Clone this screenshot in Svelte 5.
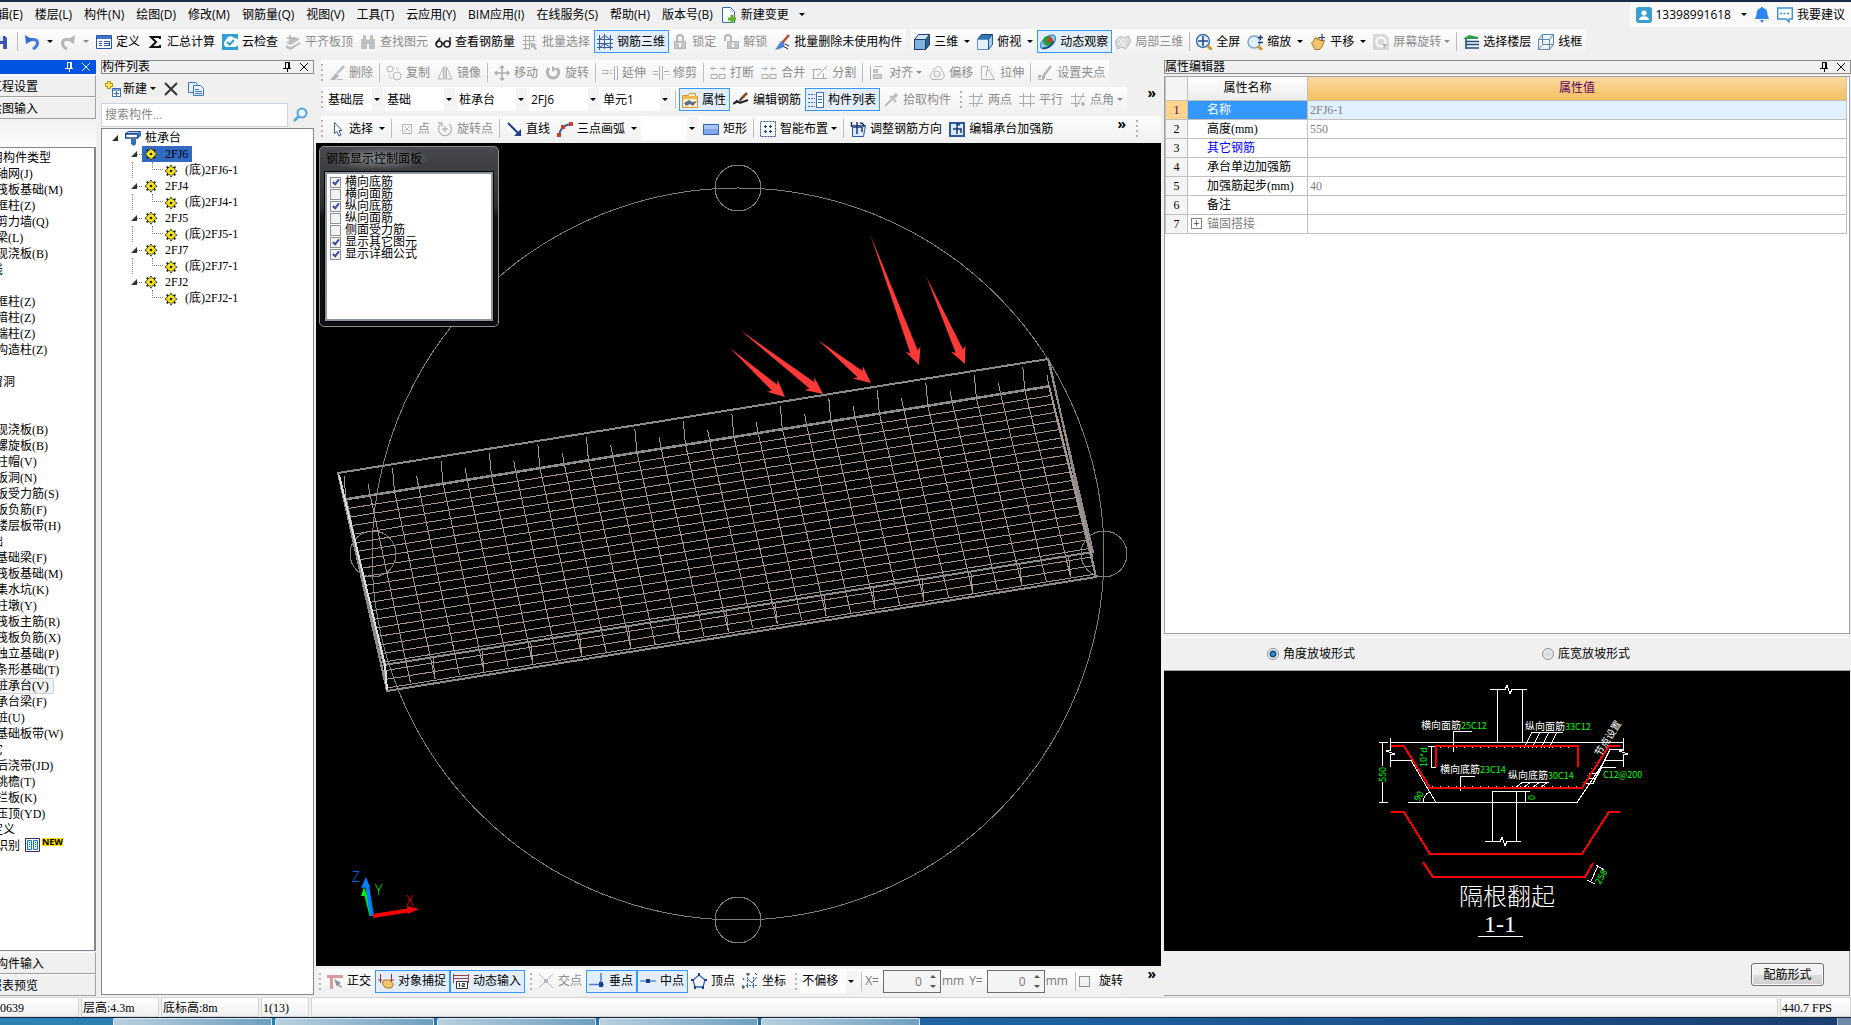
<script>
  const icons = {
    save: '<path fill="#3b55b5" d="M0 2h14l2 2v11H0z"/><path fill="#dfe6f8" d="M3 2h9v5H3z"/><path fill="#fff" d="M4 10h8v5H4z"/><path fill="#3b55b5" d="M6 11h2v3H6z"/>',
    undo: '<path fill="none" stroke="#3f7be0" stroke-width="3" d="M5 5.500h4c6 0 6 6 0 9.500"/><path fill="#2f6bd8" d="M1 1l1 9 7-4z"/>',
    redo: '<path fill="none" stroke="#777" stroke-width="3" d="M11 5.500H7c-6 0-6 6 0 9.500"/><path fill="#777" d="M15 1l-1 9-7-4z"/>',
    define: '<path fill="#fff" stroke="#2b57a8" d="M.5 1.500h15v13H.5z"/><path fill="#3f74c8" d="M1 2h14v3H1z"/><path stroke="#2b57a8" d="M3 7.500h3M3 9.500h3M3 11.500h3M8 7.500h5M8 9.500h5M8 11.500h5M13.500 7v5"/>',
    sigma: '<path fill="none" stroke="#111" stroke-width="2" d="M13 5V3H4l5 5-5 5h9v-2"/>',
    cloudcheck: '<path fill="#2f9fd8" d="M0 0h16v16H0z"/><path fill="#fff" d="M4 13a4 4 0 0 1 0-7 4.500 4.500 0 0 1 8-2 4 4 0 0 1 1 9z"/><path fill="none" stroke="#2f9fd8" stroke-width="2" d="M5 8l2.500 2.500L12 6"/>',
    align: '<path fill="#888" d="M1 9l9-6 5 2-9 6zM1 11l5 2 9-5v2l-9 6-5-2z"/><path stroke="#666" stroke-width="1.500" d="M5 1v6M2 4h8"/>',
    find: '<path fill="#888" d="M3 1h3v4H3zM10 1h3v4h-3zM1 5h6v10H1zM9 5h6v10H9zM7 6h2v4H7z"/>',
    glasses: '<circle cx="4" cy="10" r="3" fill="none" stroke="#222" stroke-width="1.500"/><circle cx="12" cy="10" r="3" fill="none" stroke="#222" stroke-width="1.500"/><path fill="none" stroke="#222" stroke-width="1.500" d="M1 10l4-6M15 10V3M7 9.500h2"/>',
    batch: '<path fill="none" stroke="#666" d="M1 2.500h12M1 6.500h12M1 10.500h8M1 14.500h7M3.500 1v15M7.500 1v15M11.500 1v6"/><path fill="#777" d="M9 8l6 3-2 1 2 3-2 1-2-3-2 1z"/>',
    rebar3d: '<path fill="none" stroke="#3c5f9c" d="M0 5.500h16M0 9.500h16M0 13.500h16M2.500 1v15M7.500 0v15M13.500 1v15M2.500 5.500l5-4 6 4M2.500 13.500l5-4 6 4"/>',
    lock: '<path fill="none" stroke="#777" stroke-width="2" d="M5 8V4a3 3 0 0 1 6 0v4"/><path fill="#999" stroke="#777" d="M2.500 7.500h11v7h-11z"/><path fill="#fff" d="M7 9h2v4H7z"/>',
    unlock: '<path fill="none" stroke="#777" stroke-width="2" d="M2 7V4a3 3 0 0 1 6 0v4"/><path fill="#999" stroke="#777" d="M4.500 7.500h11v7h-11z"/><path fill="#fff" d="M9 9h2v4H9z"/>',
    brush: '<path stroke="#b05030" stroke-width="2.500" d="M15 1L8 9"/><path fill="#4a86d8" d="M7 7l4 3-3 4-7 2z"/><path stroke="#224" d="M9 12l5 3M11 10l4 2"/>',
    cube: '<path fill="#cfe4f6" stroke="#1d3e6e" d="M.5 5.500l4-5h11v10l-4 5H.5z"/><path fill="#7fb2df" stroke="#1d3e6e" d="M.5 5.500h11v10H.5z"/><path fill="#2d5f9a" stroke="#1d3e6e" d="M11.500 5.500l4-5v10l-4 5z"/>',
    cubetop: '<path fill="#2f77b8" stroke="#1d3e6e" d="M.5 5.500l4-5h11l-4 5z"/><path fill="#e6f2fb" stroke="#5d8fbd" d="M.5 5.500h11v10H.5z"/><path fill="#a9cbe8" stroke="#1d5a8e" d="M11.500 5.500l4-5v10l-4 5z"/>',
    orbit: '<ellipse cx="8" cy="8" rx="9" ry="5" fill="#8fc6ef" stroke="#2d7fc0" transform="rotate(-40 8 8)"/><circle cx="8" cy="7" r="5" fill="#2f9a35"/><path fill="#d5372a" d="M9 2l4 4-3 3-2-2z"/><path fill="none" stroke="#1b4f80" stroke-width="1.500" d="M2 14c4 1 10-2 12-7"/>',
    local3d: '<path fill="#bbb" stroke="#777" d="M.5 7l5-5 3 2 5-2 2 6-5 7-4-2-4 2z"/><path fill="none" stroke="#fff" d="M4 5l7 8M9 4l-6 7M12 5l-6 8"/>',
    fit: '<circle cx="7" cy="7" r="6.500" fill="#e3f0fc" stroke="#3a6ea8" stroke-width="1.400"/><path stroke="#1c4a94" stroke-width="1.600" d="M7 2v10M2 7h10"/><path stroke="#d69327" stroke-width="3" d="M12 12l4 4"/>',
    zoom: '<circle cx="7" cy="8" r="6" fill="#e3f0fc" stroke="#7ba3cc" stroke-width="1.400"/><path stroke="#d69327" stroke-width="3" d="M11 12l4 4"/><path stroke="#223f70" stroke-width="1.400" d="M11 3.500h5M13.500 1v5M11 8.500h5"/>',
    pan: '<path fill="#f0c66c" stroke="#a8782a" d="M1.500 9l2-2 2-4 2 3 1-3 2 4 4-1-2 6-3 3.500H5z"/><path fill="none" stroke="#223f70" stroke-width="1.200" d="M12 0v7M9 3.500h6"/>',
    screenrot: '<path fill="#bbb" d="M0 0h12l4 4v12H0z"/><circle cx="8" cy="8" r="4.500" fill="none" stroke="#fff" stroke-width="2"/><path fill="#666" d="M10 10l4 0-3 4z"/>',
    floors: '<path fill="#2f9a4a" d="M0 5l6-4 9 2v2H4z"/><path fill="none" stroke="#1d5080" stroke-width="1.600" d="M3 7.500h13M3 10.500h13M3 14h13M3 5v10"/>',
    wire: '<path fill="#eef5fb" stroke="#5c86b4" d="M.5 5.500l4-5h11v10l-4 5H.5z"/><path fill="none" stroke="#5c86b4" d="M.5 5.500h11v10M11.500 5.500l4-5M4.500.5v10h11M4.500 10.500l-4 5"/>',
    newdoc: '<path fill="#fff" stroke="#2f6fa8" d="M1.500.5h8l4 4v11h-12z"/><path fill="#cfe2f4" d="M9 1v4h4z"/><path stroke="#5fae2c" stroke-width="3" d="M11 8v8M7 12h8"/>',
    user: '<rect width="16" height="16" rx="3" fill="#3a9ccf"/><circle cx="8" cy="6" r="2.600" fill="#fff"/><path fill="#fff" d="M3 13c0-5 10-5 10 0z"/>',
    bell: '<path fill="#2a86f0" d="M7 0h2v1c4 1 4.500 4 4.500 7l1.500 4H1l1.500-4c0-3 .5-6 4.500-7z"/><path fill="#2a86f0" d="M6 13h4l-2 3z"/>',
    chat: '<path fill="#fff" stroke="#3a8ee0" stroke-width="1.400" d="M.7 1h14.600v11H12v3l-3-3H.7z"/><path stroke="#3a8ee0" stroke-width="1.400" stroke-dasharray="2 1.500" d="M3 6.500h10"/>',
    del: '<path fill="#888" d="M14 0l2 2-7 7-2-1z"/><path fill="#777" d="M7 8l3 3-4 4-5 0z"/><path stroke="#777" d="M8 14.500h6"/>',
    copy: '<circle cx="4" cy="4" r="3" fill="none" stroke="#777"/><circle cx="11" cy="11" r="4" fill="none" stroke="#777"/><path fill="none" stroke="#777" stroke-dasharray="1 1" d="M8 3h4v3M3 9v4h3"/>',
    mirror: '<path fill="none" stroke="#777" d="M8 1v14M6.500 2v12H1zM9.500 2v12H15z"/>',
    move: '<path fill="none" stroke="#666" stroke-width="1.500" d="M8 1v14M1 8h14M6 3l2-2 2 2M6 13l2 2 2-2M3 6L1 8l2 2M13 6l2 2-2 2"/>',
    rotate: '<path fill="none" stroke="#777" stroke-width="3" d="M4 3c-4 5 0 10 4 10s8-5 4-10"/><path fill="#777" d="M7 1v6l5-3z"/>',
    extend: '<path fill="none" stroke="#666" d="M0 5.500h6v3H0M8 5.500h2M8 8.500h2M12.500 1v14M15.500 1v14"/>',
    trim: '<path fill="none" stroke="#666" d="M0 6.500h5M0 9.500h5M6.500 1v14M9.500 1v14M11 6.500h5" /><path stroke="#888" stroke-dasharray="1 1" d="M11 9.500h5"/>',
    cut: '<path fill="none" stroke="#666" d="M1 3.500h5M10 3.500h5M3 1.500l-2 2 2 2M13 1.500l2 2-2 2M1 9.500h6v4H1zM9 9.500h6v4H9z"/>',
    merge: '<path fill="none" stroke="#666" d="M1 3.500h5M10 3.500h5M4 1.500l2 2-2 2M12 1.500l-2 2 2 2M1 9.500h6v4H1zM9 9.500h6v4H9z"/>',
    split: '<path fill="none" stroke="#666" d="M0 4.500h9M0 13.500h15M1.500 4v9M11.500 8v5M5 11L15 1"/>',
    aligned: '<path stroke="#666" d="M1.500 1v14"/><path fill="#aaa" stroke="#777" d="M4.500 4.500h4v3h-4zM4.500 9.500h8v4h-8z"/><path stroke="#777" d="M6 1.500h7"/>',
    offset: '<path fill="none" stroke="#777" d="M4 14.500c-4-1-3-5-1-7l4-5c2-2 5-1 5 1l3 6c1 4-2 5-4 5z"/><circle cx="8" cy="9" r="3" fill="none" stroke="#777"/>',
    stretch: '<path fill="none" stroke="#777" d="M1.500 14.500v-13h6v4M1.500 14.500h13l-5-9h-3v6"/><path stroke="#777" stroke-dasharray="1 1" d="M8 2l5 3"/>',
    grip: '<path stroke="#777" d="M1 14.500h6M9 14.500h6"/><path stroke="#777" stroke-width="2.500" d="M14 1L7 10"/><path fill="#777" d="M1 10h3v3H1zM5 10h3v4H5z"/>',
    props: '<path fill="#fff3d4" stroke="#d8962a" d="M.5 3.500h6l1-2h6v3h2v11H.5z"/><path fill="#f4b850" d="M1 4h14v3H1z"/><path fill="#5b6f8c" d="M2 11l5-3 3 2 5-1-4 5-3-2-4 2z"/>',
    editbar: '<path stroke="#222" stroke-width="2" d="M0 12l4-3 3 2 8-3"/><path stroke="#8a4a2a" stroke-width="2.500" d="M14 1L8 7"/><path fill="#222" d="M7 6l2 2-3 2z"/>',
    list: '<path fill="none" stroke="#3b6db0" stroke-dasharray="2 1" d="M0 2.500h7M0 6.500h7M0 10.500h7M0 14.500h7"/><path fill="#fff" stroke="#3b6db0" d="M8.500.5h7v15h-7z"/><path stroke="#3b6db0" d="M10 4.500h4M10 7.500h4M10 10.500h4"/>',
    pick: '<path stroke="#888" stroke-width="3.500" d="M14 2l-4 4"/><path stroke="#888" stroke-width="2" d="M10 6l-8 8M7 4l6 6"/>',
    twopt: '<path fill="none" stroke="#666" d="M1 4.500h14M1 11.500h14M5.500 1v14M14 1L8 15"/>',
    parallel: '<path fill="none" stroke="#666" d="M0 4.500h16M0 11.500h16M4.500 1v14M11.500 1v14"/>',
    angle: '<path fill="none" stroke="#666" d="M1 4.500h14M1 11.500h9M5.500 1v14M14 1L6 15"/><circle cx="13" cy="12" r="2" fill="#777"/>',
    pointer: '<path fill="#fff" stroke="#3b5e92" d="M5.500 1.500v11l2.500-2 2 4.500 2-1-2-4.500h3z"/>',
    point: '<path fill="none" stroke="#777" d="M4.500 3.500h9v9h-9zM6 5l6 6M12 5l-6 6"/>',
    rotpoint: '<path fill="none" stroke="#777" stroke-width="1.300" d="M4 3a6.500 6.500 0 1 0 8 0M5 8h6M8 5v6M1 2h4v4"/>',
    line: '<path stroke="#1c3f8c" stroke-width="2" d="M2 2l10 10"/><path fill="#1c3f8c" d="M15 15H8l7-7z"/>',
    arc: '<path fill="none" stroke="#2a66b8" stroke-width="2" d="M2 14C3 8 7 4 14 3"/><path fill="#c8402a" d="M0 12h4v4H0zM4 4h4v4H4zM12 1h4v4h-4z"/>',
    rect: '<path fill="#7fa5ea" stroke="#3560b0" d="M.5 3.500h15v10H.5z"/><path fill="#a9c4f5" d="M1 4h14v4H1z"/>',
    smart: '<path fill="#f4f8fd" stroke="#2b4d86" stroke-dasharray="2 1" d="M.5.5h15v15H.5z"/><path stroke="#1c3766" d="M4 5.500h3M5.500 4v3M9 5.500h3M10.500 4v3M4 10.500h3M5.500 9v3M9 10.500h3M10.500 9v3"/>',
    direction: '<path fill="#dce9f8" stroke="#2b5ca0" d="M2.500 4.500h13l-2 11h-11z"/><path fill="none" stroke="#1c3766" stroke-width="1.500" d="M7 1v12M3 6h9v5M10 2c3 0 4 2 4 4M1.500 1v5"/>',
    editcap: '<path fill="#dce9f8" stroke="#2b5ca0" stroke-width="2" d="M1 2h14v13H1z"/><path fill="none" stroke="#1c3766" stroke-width="1.500" d="M8 3v10M4 8h8v4M8 3l3 1"/>',
    add: '<path fill="#fff" stroke="#3b6db0" d="M7.500 7.500h8v8h-8z"/><path fill="#7fa5da" d="M8 8h7v2H8z"/><path stroke="#3b6db0" d="M9 12.500h5M11.500 10v5"/><path stroke="#b89410" stroke-width="4" d="M4 0v8M0 4h8"/><path stroke="#ffe65a" stroke-width="2" d="M4 1v6M1 4h6"/>',
    cross: '<path stroke="#333" stroke-width="2" d="M2 2l12 12M14 2L2 14"/>',
    pages: '<path fill="#e8f1fb" stroke="#3b76bd" d="M.5 1.500h7l2 2v8h-9z"/><path fill="#e8f1fb" stroke="#3b76bd" d="M5.500 4.500h7l3 3v7h-10z"/><path stroke="#3b76bd" d="M7 8.500h4M7 10.500h7M7 12.500h7"/>',
    search: '<circle cx="9" cy="6" r="4.500" fill="#eaf5fd" stroke="#56a5dc" stroke-width="2"/><path stroke="#56a5dc" stroke-width="2.500" d="M5.500 9.500L1 14"/>',
    pile: '<path fill="#b7cfec" stroke="#1c4a94" d="M.5 3.500l3-2h12l-3 2z"/><path fill="#fff" stroke="#1c4a94" stroke-width="1.500" d="M.7 4h12v4h-12z"/><path fill="#2f6dc0" d="M13 4l3-2v4l-3 2zM6 9h5v5l-2 2-3-2z"/>',
    gear: '<path stroke="#222" stroke-width="2" d="M8 1v14M1 8h14M3 3l10 10M13 3L3 13"/><circle cx="8" cy="8" r="5" fill="#f4e21c" stroke="#222"/><path stroke="#f4e21c" stroke-width="1.500" d="M8 2v12M2 8h12"/><circle cx="8" cy="8" r="1.500" fill="#222"/>',
    ortho: '<path stroke="#d89a9a" stroke-width="3" d="M0 3.500h16M4.500 2v14"/><path fill="#8a94a4" d="M7 6l7 4-2 1 3 3-1 1-3-3-1 2z"/>',
    snap: '<path fill="none" stroke="#9a3030" d="M2.500 1v9M13.500 1v8M0 7h4M12 7h4"/><path fill="#f0c66c" stroke="#a8782a" d="M5.500 7l6 0 4 4-2 4h-6l-3-4z"/>',
    dyn: '<path fill="none" stroke="#a04040" d="M0 2.500h16M.5 1v9M15.500 1v9M0 5.500h16"/><path fill="#fff" stroke="#333" d="M3.500 8.500h11v7h-11z"/><path fill="none" stroke="#333" d="M6.500 10v4M9 10.500h2.500v1.500H9v1.500h3"/>',
    inter: '<path stroke="#777" d="M1 1l14 14M15 1L1 15"/><path fill="#777" d="M6 6h4v4H6z"/>',
    perp: '<path stroke="#4a7fc8" stroke-width="1.500" d="M12 0v14M0 11.500h15"/><path fill="#1c3f8c" d="M10 9h4v5h-4z"/>',
    mid: '<path stroke="#4a9ad8" stroke-width="1.500" d="M0 8h16"/><path fill="#1c2f8c" d="M6 6h4v4H6z"/>',
    vertex: '<path fill="none" stroke="#2a66b8" stroke-width="1.300" d="M8 2l6 5-2 7H4L2 7z"/><path fill="#1c3f8c" d="M7 0h2v3H7zM0 6h3v2H0zM13 6h3v2h-3zM3 13h2v3H3zM11 13h2v3h-2z"/>',
    coord: '<path fill="none" stroke="#2a66b8" stroke-dasharray="2 1" d="M5.500 4v12M4 12.500h12M11.500 4v12"/><path fill="none" stroke="#2a66b8" d="M6 6l4 4 5-6"/><path fill="none" stroke="#333" d="M5 0h2v2H5zM13 0l2 2M1 5l1 2M0 13h2v2H0z"/>'
  };

  const menus = ["楼层(L)", "构件(N)", "绘图(D)", "修改(M)", "钢筋量(Q)", "视图(V)", "工具(T)", "云应用(Y)", "BIM应用(I)", "在线服务(S)", "帮助(H)", "版本号(B)"];

  const mainTools = [
    { icon: "define", label: "定义" },
    { icon: "sigma", label: "汇总计算" },
    { icon: "cloudcheck", label: "云检查" },
    { icon: "align", label: "平齐板顶", off: true },
    { icon: "find", label: "查找图元", off: true },
    { icon: "glasses", label: "查看钢筋量" },
    { icon: "batch", label: "批量选择", off: true },
    { icon: "rebar3d", label: "钢筋三维", on: true },
    { icon: "lock", label: "锁定", off: true },
    { icon: "unlock", label: "解锁", off: true },
    { icon: "brush", label: "批量删除未使用构件" }
  ];

  const viewTools = [
    { icon: "cube", label: "三维", arrow: "wide" },
    { icon: "cubetop", label: "俯视", arrow: "wide" },
    { icon: "orbit", label: "动态观察", on: true },
    { icon: "local3d", label: "局部三维", off: true },
    { sep: true },
    { icon: "fit", label: "全屏" },
    { icon: "zoom", label: "缩放", arrow: "wide" },
    { icon: "pan", label: "平移", arrow: "wide" },
    { icon: "screenrot", label: "屏幕旋转", off: true, arrow: "tight" },
    { sep: true },
    { icon: "floors", label: "选择楼层" },
    { icon: "wire", label: "线框" }
  ];

  const editTools = [
    { icon: "del", label: "删除", off: true },
    { sep: true },
    { icon: "copy", label: "复制", off: true },
    { icon: "mirror", label: "镜像", off: true },
    { sep: true },
    { icon: "move", label: "移动", off: true },
    { icon: "rotate", label: "旋转", off: true },
    { sep: true },
    { icon: "extend", label: "延伸", off: true },
    { icon: "trim", label: "修剪", off: true },
    { sep: true },
    { icon: "cut", label: "打断", off: true },
    { icon: "merge", label: "合并", off: true },
    { icon: "split", label: "分割", off: true },
    { sep: true },
    { icon: "aligned", label: "对齐", off: true, arrow: "tight" },
    { icon: "offset", label: "偏移", off: true },
    { icon: "stretch", label: "拉伸", off: true },
    { sep: true },
    { icon: "grip", label: "设置夹点", off: true }
  ];

  const memberTools = [
    { sep: true },
    { icon: "props", label: "属性", on: true },
    { icon: "editbar", label: "编辑钢筋" },
    { icon: "list", label: "构件列表", on: true },
    { icon: "pick", label: "拾取构件", off: true }
  ];

  const axisTools = [
    { icon: "twopt", label: "两点", off: true },
    { icon: "parallel", label: "平行", off: true },
    { icon: "angle", label: "点角", off: true, arrow: "tight" }
  ];

  const drawTools = [
    { icon: "pointer", label: "选择", arrow: "wide" },
    { sep: true },
    { icon: "point", label: "点", off: true },
    { icon: "rotpoint", label: "旋转点", off: true },
    { sep: true },
    { icon: "line", label: "直线" },
    { icon: "arc", label: "三点画弧", arrow: "wide" }
  ];

  const layoutTools = [
    { icon: "rect", label: "矩形" },
    { sep: true },
    { icon: "smart", label: "智能布置", arrow: "tight" },
    { sep: true },
    { icon: "direction", label: "调整钢筋方向" },
    { icon: "editcap", label: "编辑承台加强筋" }
  ];

  const modeTools = [
    { icon: "ortho", label: "正交" },
    { icon: "snap", label: "对象捕捉", on: true },
    { icon: "dyn", label: "动态输入", on: true }
  ];

  const snapTools = [
    { icon: "inter", label: "交点", off: true },
    { icon: "perp", label: "垂点", on: true },
    { icon: "mid", label: "中点", on: true },
    { icon: "vertex", label: "顶点" },
    { icon: "coord", label: "坐标" }
  ];

  const combos = [
    { name: "楼层", value: "基础层", small: true },
    { name: "构件大类", value: "基础" },
    { name: "构件类型", value: "桩承台" },
    { name: "构件", value: "2FJ6" },
    { name: "单元", value: "单元1" }
  ];

  const categories = [
    ["常用构件类型", ["轴网(J)", "筏板基础(M)", "框柱(Z)", "剪力墙(Q)", "梁(L)", "现浇板(B)"]],
    ["轴线", []],
    ["柱", ["框柱(Z)", "暗柱(Z)", "端柱(Z)", "构造柱(Z)"]],
    ["墙", []],
    ["门窗洞", []],
    ["梁", []],
    ["板", ["现浇板(B)", "螺旋板(B)", "柱帽(V)", "板洞(N)", "板受力筋(S)", "板负筋(F)", "楼层板带(H)"]],
    ["基础", ["基础梁(F)", "筏板基础(M)", "集水坑(K)", "柱墩(Y)", "筏板主筋(R)", "筏板负筋(X)", "独立基础(P)", "条形基础(T)", "桩承台(V)", "承台梁(F)", "桩(U)", "基础板带(W)"]],
    ["其它", ["后浇带(JD)", "挑檐(T)", "栏板(K)", "压顶(YD)"]],
    ["自定义", []]
  ];

  const members = ["2FJ6", "2FJ4", "2FJ5", "2FJ7", "2FJ2"];

  const properties = [
    { name: "名称", value: "2FJ6-1", current: true },
    { name: "高度(mm)", value: "550" },
    { name: "其它钢筋", value: "", link: true },
    { name: "承台单边加强筋", value: "" },
    { name: "加强筋起步(mm)", value: "40" },
    { name: "备注", value: "" },
    { name: "锚固搭接", value: "", group: true }
  ];

  let rebarOptions = $state([
    { label: "横向底筋", checked: true },
    { label: "横向面筋", checked: false },
    { label: "纵向底筋", checked: true },
    { label: "纵向面筋", checked: false },
    { label: "侧面受力筋", checked: false },
    { label: "显示其它图元", checked: true },
    { label: "显示详细公式", checked: true }
  ]);
  let slope = $state("angle");
  let offsetX = $state(0);
  let offsetY = $state(0);

  // cage corners: top-left, top-right, bottom-right, bottom-left
  const cage = [[30, 356], [733, 243], [780, 434], [71, 548]];
  const mix = (a, b, t) => [a[0] + (b[0] - a[0]) * t, a[1] + (b[1] - a[1]) * t];
  const seg = (a, b) => `M${a[0].toFixed(1)} ${a[1].toFixed(1)}L${b[0].toFixed(1)} ${b[1].toFixed(1)}`;

  let mesh = "";
  for (let i = 0; i < 23; i++) {
    const t = 0.005 + (i / 22) * 0.98;
    mesh += seg(mix(cage[0], cage[3], t), mix(cage[1], cage[2], t));
  }
  for (let i = 0; i < 30; i++) {
    const top = mix(cage[0], cage[1], i / 29);
    const bottom = mix(cage[3], cage[2], i / 29);
    const bend = mix(top, bottom, 0.98);
    mesh += seg(top, bend);
    mesh += i % 2 ? seg([top[0] - 2, top[1] - 11], top) : seg([top[0] - 2, top[1] - 23], top);
    if (i % 2 === 0) mesh += seg([bend[0] - 2, bend[1] - 21], bend);
  }

  const arrowShape = ([x1, y1, x2, y2]) => {
    const len = Math.hypot(x2 - x1, y2 - y1);
    const ux = (x2 - x1) / len;
    const uy = (y2 - y1) / len;
    const at = (back, side) => `${(x2 - ux * back - uy * side).toFixed(1)},${(y2 - uy * back + ux * side).toFixed(1)}`;
    return [`${x1},${y1}`, at(14, 4), at(17, 8), `${x2},${y2}`, at(17, -8), at(14, -4)].join(" ");
  };
  const arrows = [
    [414, 205, 469, 254],
    [424, 187, 507, 251],
    [502, 197, 555, 240],
    [554, 91, 603, 222],
    [610, 133, 649, 221]
  ];
</script>

{#snippet icon(name)}
  <svg class="icon" viewBox="0 0 16 16" aria-hidden="true">{@html icons[name]}</svg>
{/snippet}

{#snippet tools(list)}
  {#each list as t}
    {#if t.sep}
      <span class="sep"></span>
    {:else}
      <button class="tool" class:on={t.on} disabled={t.off}>
        {@render icon(t.icon)}<span>{t.label}</span>
        {#if t.arrow}<i class="arrow {t.arrow}"></i>{/if}
      </button>
    {/if}
  {/each}
{/snippet}

{#snippet combo(name, value, size)}
  <span class="combo {size}">
    <select aria-label={name}><option>{value}</option></select>
    <i class="arrow"></i>
  </span>
{/snippet}

{#snippet caption(title, active)}
  <header class="caption" class:active>
    <h2>{title}</h2>
    <button aria-label="固定"><svg viewBox="0 0 10 10"><path fill="none" stroke="currentColor" d="M3 .5h4M3.500 0v6M6.500 0v6M7.500 0v6M1 6.500h8M5.500 7v3" /></svg></button>
    <button aria-label="关闭"><svg viewBox="0 0 10 10"><path stroke="currentColor" d="M1 1l8 8M9 1L1 9" /></svg></button>
  </header>
{/snippet}

<div class="app">
  <nav class="menubar">
    <button class="cut">编辑(E)</button>
    {#each menus as m}<button>{m}</button>{/each}
    <button class="change">{@render icon("newdoc")}<span>新建变更</span><i class="arrow wide"></i></button>
    <div class="account">
      <button>{@render icon("user")}<span>13398991618</span><i class="arrow wide"></i></button>
      <button aria-label="通知">{@render icon("bell")}</button>
      <button>{@render icon("chat")}<span>我要建议</span></button>
    </div>
  </nav>

  <div class="toolbar main">
    <div class="group file">
      <button class="tool" aria-label="保存">{@render icon("save")}</button>
      <span class="sep"></span>
      <button class="tool" aria-label="撤销">{@render icon("undo")}<i class="arrow tight"></i></button>
      <button class="tool" aria-label="恢复" disabled>{@render icon("redo")}<i class="arrow tight"></i></button>
    </div>
    <div class="group">{@render tools(mainTools)}</div>
    <div class="group view">{@render tools(viewTools)}</div>
  </div>

  <div class="workspace">
    <aside class="modules">
      {@render caption("模块导航栏", true)}
      <button class="module first">工程设置</button>
      <button class="module">绘图输入</button>
      <div class="strip"></div>
      <ul class="types">
        {#each categories as [name, items]}
          <li>{name}</li>
          {#each items as item}
            <li class="leaf"><span class:picked={item === "桩承台(V)"}>{item}</span></li>
          {/each}
        {/each}
        <li class="leaf cad">
          识别
          <svg width="15" height="14" viewBox="0 0 15 14" aria-hidden="true"><path fill="#fff" stroke="#335" d="M.5.5h14v13H.5z" /><path fill="#d8ebff" stroke="#1677d8" d="M2.500 2.500h4v9h-4zM8.500 2.500h4v9h-4z" /><path stroke="#1677d8" stroke-dasharray="1 1" d="M4.500 4v6M10.500 4v6" /></svg>
          <b>NEW</b>
        </li>
      </ul>
      <button class="module">单构件输入</button>
      <button class="module">报表预览</button>
    </aside>

    <aside class="members">
      {@render caption("构件列表")}
      <div class="member-bar">
        <button class="tool">{@render icon("add")}<span>新建</span><i class="arrow tight"></i></button>
        <button class="tool" aria-label="删除">{@render icon("cross")}</button>
        <button class="tool" aria-label="复制">{@render icon("pages")}</button>
      </div>
      <div class="search">
        <input type="text" placeholder="搜索构件..." aria-label="搜索构件" />
        <button aria-label="搜索">{@render icon("search")}</button>
      </div>
      <ul class="tree">
        <li class="root"><i class="fold"></i>{@render icon("pile")}<span>桩承台</span></li>
        {#each members as m, i}
          <li class="member"><i class="fold"></i><i class="dash"></i><span class="node" class:selected={i === 0}>{@render icon("gear")}{m}</span></li>
          <li class="bottom" class:last={i === members.length - 1}><i class="elbow"></i>{@render icon("gear")}<span>(底){m}-1</span></li>
        {/each}
      </ul>
    </aside>

    <main>
      <div class="toolbar edit">
        <div class="group"><i class="grip"></i>{@render tools(editTools)}</div>
      </div>
      <div class="toolbar">
        <div class="group">
          <i class="grip"></i>
          {#each combos as c}{@render combo(c.name, c.value, c.small ? "small" : "")}{/each}
          {@render tools(memberTools)}
        </div>
        <div class="group"><i class="grip"></i>{@render tools(axisTools)}</div>
        <button class="more" aria-label="更多">»</button>
      </div>
      <div class="toolbar">
        <div class="group draw">
          <i class="grip"></i>
          {@render tools(drawTools)}
          {@render combo("绘制方式", "", "small")}
          {@render tools(layoutTools)}
          <button class="more" aria-label="更多">»</button>
        </div>
        <div class="group tail"><i class="grip"></i></div>
      </div>

      <div class="canvas">
        <svg viewBox="0 0 845 823" preserveAspectRatio="xMidYMid meet" aria-label="钢筋三维">
          <g fill="none" stroke="#7d7d7d" shape-rendering="crispEdges">
            <circle cx="422" cy="411" r="366" />
            <circle cx="422" cy="45" r="23" />
            <circle cx="422" cy="777" r="23" />
            <circle cx="57" cy="411" r="23" />
            <circle cx="788" cy="411" r="23" />
          </g>
          <path d={mesh} fill="none" stroke="#a8958c" shape-rendering="crispEdges" />
          <g fill="none" stroke="#8c8c8c" stroke-width="2" shape-rendering="crispEdges">
            <path d="M22 330L732 216L777 409L68 522Z" />
            <path d="M30 356L733 243L780 434L71 548Z" />
            <path d="M22 330l49 218M733 217l47 217" />
            <path stroke="#a8958c" d="M733 243l43 170" />
            <path stroke="#dcdcdc" d="M23 332l46 190l2 25" />
          </g>
          {#each arrows as a}<polygon points={arrowShape(a)} fill="#ff3838" />{/each}
          <path stroke="#00f000" stroke-width="3" d="M55 773l-6-24" />
          <path fill="#00f000" d="M48 744l-3 9h6z" />
          <path stroke="#0080ff" stroke-width="4" d="M56 773l-5-31" />
          <path fill="#0080ff" d="M50 734l-5 11 9-1z" />
          <path stroke="red" stroke-width="4" d="M57 773l38-6" />
          <path fill="red" d="M103 766l-12-3 1 8z" />
          <g class="axis">
            <text x="36" y="739" fill="#0080ff">Z</text>
            <text x="59" y="752" fill="#00f000">Y</text>
            <text x="90" y="763" fill="red">X</text>
          </g>
        </svg>
        <section class="dialog">
          <h3>钢筋显示控制面板</h3>
          <div class="options">
            {#each rebarOptions as o}
              <label><input type="checkbox" bind:checked={o.checked} />{o.label}</label>
            {/each}
          </div>
        </section>
      </div>

      <div class="toolbar snap">
        <div class="group"><i class="grip"></i>{@render tools(modeTools)}</div>
        <div class="group"><i class="grip"></i>{@render tools(snapTools)}</div>
        <div class="group coords">
          <i class="grip"></i>
          {@render combo("偏移方式", "不偏移", "small")}
          <span class="sep"></span>
          <label>X= <input type="number" bind:value={offsetX} disabled /></label><span class="unit">mm</span>
          <label>Y= <input type="number" bind:value={offsetY} disabled /></label><span class="unit">mm</span>
          <span class="sep"></span>
          <label class="turn"><input type="checkbox" /><span>旋转</span></label>
        </div>
        <button class="more" aria-label="更多">»</button>
      </div>
    </main>

    <aside class="inspector">
      {@render caption("属性编辑器")}
      <div class="sheet">
        <table>
          <thead>
            <tr><th class="num"></th><th class="name">属性名称</th><th class="value">属性值</th></tr>
          </thead>
          <tbody>
            {#each properties as p, i}
              <tr class:current={p.current} class:link={p.link} class:group-row={p.group}>
                <th class="num">{i + 1}</th>
                <td class="name">{#if p.group}<button class="plus" aria-label="展开">+</button>{/if}{p.name}</td>
                <td class="value">{p.value}</td>
              </tr>
            {/each}
          </tbody>
        </table>
      </div>
      <div class="slopes">
        <label><input type="radio" name="slope" value="angle" bind:group={slope} />角度放坡形式</label>
        <label><input type="radio" name="slope" value="width" bind:group={slope} />底宽放坡形式</label>
      </div>
      <div class="section">
        <svg viewBox="0 0 686 280" aria-label="隔根翻起 1-1">
          <g fill="none" stroke="#fff" shape-rendering="crispEdges">
            <path d="M326 18.500h15l2-4 3 8 2-4h15M333.500 18v53M358.500 18v53" />
            <path d="M226 71.500h234M226.500 67v12l-4 1 8 3-4 1v12M459.500 67v12l-4 1 8 3-4 1v12" />
            <path d="M226 89.500h21l25 42M244 131.500h169l28-42h18M421 112.500h8l17-34h13" />
            <path d="M328.500 170v-49.500h24V170M321 170.500h15l2-4 3 8 2-4h14M352 120.500h14M361.500 120v11" />
            <path d="M218.500 71v60M215 71.500h9M215 131.500h9M267.500 75v21M264 75.500h8M267 96.500h5" />
            <path d="M259.500 131c0-5 2-8 6-10" />
            <path d="M289.500 81V60.500h18M296.500 120v-14.500h14" />
            <path d="M368 61.500h31M368 61l-8 16M376 61l-8 16M385 61l-8 16M393 61l-8 16" />
            <path d="M359 111.500h26M359 111l-7 5M367 111l-7 5M376 111l-7 5M384 111l-7 5" />
            <path d="M452 96.500h-14l-9 16M425 102.500h9M423 107.500h9" />
            <path d="M434 195l-7 15M432 194l8 5M423 209l8 4" />
            <path d="M314 265.500h45" />
          </g>
          <g fill="none" stroke="red" stroke-width="2" shape-rendering="crispEdges">
            <path d="M227 75h13l26 42h152l27-42h11M272 96V75h142v21" />
            <path d="M227 141h13l26 42h152l27-42h11M259 191l10 15h152l8-14" />
          </g>
          <g stroke="#ff0" stroke-dasharray="1 7" shape-rendering="crispEdges">
            <path d="M276 76.500h136M268 115.500h148" />
            <path stroke="#f0f" d="M419 112l16-26" />
          </g>
          <g class="note">
            <text x="257" y="58">横向面筋</text>
            <text x="361" y="59">纵向面筋</text>
            <text x="276" y="102">横向底筋</text>
            <text x="344" y="108">纵向底筋</text>
            <text x="0" y="0" transform="translate(436 86) rotate(-57)">节点设置</text>
          </g>
          <g class="dim">
            <text x="297" y="58">25C12</text>
            <text x="401" y="59">33C12</text>
            <text x="316" y="102">23C14</text>
            <text x="384" y="108">30C14</text>
            <text x="439" y="107">C12@200</text>
            <path fill="#000" d="M213 95h11v16h-11z" />
            <text transform="translate(222 111) rotate(-90)">550</text>
            <text transform="translate(263 96) rotate(-90)">10*d</text>
            <text transform="translate(255 131) rotate(-60)">90</text>
            <text transform="translate(371 129) rotate(-90)">0</text>
            <text transform="translate(436 214) rotate(-60)">258</text>
          </g>
          <text class="title" x="295" y="234">隔根翻起</text>
          <text class="title" x="320" y="261">1-1</text>
        </svg>
      </div>
      <div class="actions"><button>配筋形式</button></div>
    </aside>
  </div>

  <footer class="status">
    <span class="s1">0639</span>
    <span class="s2">层高:4.3m</span>
    <span class="s3">底标高:8m</span>
    <span class="s4">1(13)</span>
    <span class="rest"></span>
    <span class="fps">440.7 FPS</span>
  </footer>
  <div class="taskbar">
    <i class="tray"></i>
    {#each Array(5) as _}<i class="task"></i>{/each}
    <i class="desk"></i>
  </div>
</div>

<style>
  :global(body) {
    margin: 0;
    overflow: hidden;
  }

  .app {
    --ui: "Open Sans", "Noto Sans CJK SC", sans-serif;
    --song: "Liberation Serif", "Noto Sans CJK SC", serif;
    box-sizing: border-box;
    height: 100vh;
    display: flex;
    flex-direction: column;
    overflow: hidden;
    border-top: 2px solid #1b2b4c;
    background: #f0f0f0;
    color: #000;
    font: 12px/16px var(--ui);
    white-space: nowrap;
  }

  .app :is(button, input, select) {
    margin: 0;
    padding: 0;
    border: 0;
    background: none;
    color: inherit;
    font: inherit;
  }

  ul,
  h2,
  h3 {
    margin: 0;
    padding: 0;
    list-style: none;
    font-size: 12px;
    font-weight: normal;
  }

  .icon {
    flex: none;
    width: 16px;
    height: 16px;
  }

  .arrow {
    flex: none;
    border: solid transparent;
    border-width: 3px 3px 0;
    border-top-color: #000;
  }

  .arrow.wide {
    margin-left: 6px;
  }

  .arrow.tight {
    margin-left: 3px;
  }

  .menubar {
    flex: none;
    box-sizing: border-box;
    height: 27px;
    display: flex;
    align-items: center;
    gap: 12px;
    padding-bottom: 2px;
  }

  .menubar button {
    display: flex;
    align-items: center;
    gap: 4px;
  }

  .app .menubar .cut {
    margin-left: -15px;
  }

  .app .menubar .change {
    margin-left: -4px;
  }

  .account {
    display: flex;
    align-items: center;
    gap: 7px;
    height: 24px;
    margin-left: auto;
    padding: 0 6px;
    background: #f9f9f9;
  }

  .toolbar {
    flex: none;
    display: flex;
    align-items: center;
    height: 29px;
    padding-left: 5px;
  }

  .toolbar.main {
    height: 25px;
    padding: 0;
    margin-bottom: 6px;
  }

  .toolbar.edit {
    height: 25px;
  }

  .toolbar.snap {
    height: 30px;
    padding-left: 3px;
  }

  .group {
    display: flex;
    align-items: center;
    height: 25px;
    background: linear-gradient(#fdfdfd, #f1f1f1);
  }

  .file {
    margin-left: -12px;
  }

  .view {
    margin-left: 5px;
  }

  .tool {
    display: flex;
    align-items: center;
    height: 23px;
  }

  .app .tool {
    padding: 0 3px 0 2px;
    border: 1px solid transparent;
  }

  .tool .icon {
    margin-right: 4px;
  }

  .app .tool.on {
    border-color: #3399ff;
    background: #e3eefa;
  }

  .app .tool:disabled {
    color: #8d8d8d;
  }

  .tool:disabled .icon {
    opacity: 0.5;
  }

  .tool:disabled .arrow {
    border-top-color: #8d8d8d;
  }

  .sep {
    flex: none;
    width: 1px;
    height: 19px;
    margin: 0 3px 0 2px;
    background: #bdbdbd;
  }

  .grip {
    flex: none;
    width: 2px;
    height: 17px;
    margin-right: 3px;
    background: repeating-linear-gradient(#b5b5b5 0 2px, transparent 2px 5px);
  }

  .group + .group .grip {
    margin-left: 5px;
  }

  .combo {
    display: flex;
    align-items: center;
    width: 70px;
    height: 23px;
    margin-right: 2px;
    background: linear-gradient(90deg, #fff 59px, #f4f4f4 59px);
  }

  .combo.small {
    width: 57px;
    background: linear-gradient(90deg, #fff 46px, #f4f4f4 46px);
  }

  .app .combo select {
    flex: 1;
    min-width: 0;
    padding-left: 2px;
    appearance: none;
  }

  .combo .arrow {
    margin-right: 3px;
  }

  .app .more {
    align-self: flex-start;
    margin: 0 5px 0 auto;
    font: bold 14px/16px var(--ui);
  }

  .draw {
    flex: 1;
  }

  .tail {
    width: 30px;
  }

  .workspace {
    flex: 1;
    min-height: 0;
    display: flex;
  }

  .caption {
    flex: none;
    box-sizing: border-box;
    display: flex;
    align-items: center;
    gap: 7px;
    height: 14px;
    padding-right: 4px;
    border: 1px solid #8c8c8c;
    font: 12px/12px var(--song);
  }

  .caption h2 {
    flex: 1;
  }

  .caption button {
    display: flex;
  }

  .caption svg {
    width: 10px;
    height: 10px;
    shape-rendering: crispEdges;
  }

  .caption.active {
    border-color: #0054e3;
    background: #0054e3;
    color: #fff;
  }

  /* the window is shifted left, so this panel starts outside the page */
  .modules {
    flex: none;
    width: 164px;
    margin-left: -68px;
    display: flex;
    flex-direction: column;
    font-family: var(--song);
  }

  .app .module {
    flex: none;
    box-sizing: border-box;
    height: 22px;
    padding-top: 1px;
    border: 1px solid;
    border-color: #fff #a0a0a0 #a0a0a0 #fff;
    font-family: var(--song);
  }

  .app .module.first {
    margin-top: 1px;
  }

  .strip {
    height: 28px;
    background: linear-gradient(#f0f0f0, #fdfdfd);
  }

  .types {
    flex: 1;
    min-height: 0;
    margin-bottom: 1px;
    overflow: hidden;
    padding: 2px 0 0 46px;
    border: solid #828790;
    border-width: 1px 2px 1px 1px;
    background: #fff;
  }

  .types li {
    display: flex;
    height: 16px;
  }

  .types .leaf {
    padding-left: 17px;
  }

  .types .picked {
    height: 14px;
    padding-right: 4px;
    border: 1px solid #d4d4d4;
    border-left: 0;
    border-radius: 2px;
    background: #f2f2f2;
    line-height: 14px;
  }

  .types .cad {
    gap: 5px;
  }

  .cad b {
    margin-left: -3px;
    align-self: flex-start;
    background: #ffe000;
    font: bold 9px/8px var(--ui);
  }

  .members {
    flex: none;
    width: 213px;
    margin: 0 2px 0 5px;
    display: flex;
    flex-direction: column;
    font-family: var(--song);
  }

  .member-bar {
    flex: none;
    display: flex;
    align-items: center;
    height: 29px;
    padding-left: 1px;
    font-family: var(--ui);
  }

  .member-bar .tool .icon {
    margin-right: 2px;
  }

  .search {
    flex: none;
    display: flex;
    height: 24px;
  }

  .app .search input {
    flex: 1;
    min-width: 0;
    padding-left: 3px;
    border: 1px solid #d0d4dc;
    background: #fff;
  }

  .search input::placeholder {
    color: #888;
  }

  .search button {
    display: flex;
    align-items: center;
    justify-content: center;
    width: 26px;
  }

  .tree {
    flex: 1;
    margin: 1px 0 1px;
    padding-top: 1px;
    border: 1px solid #828790;
    background: #fff;
  }

  .tree li {
    display: flex;
    align-items: center;
    height: 16px;
  }

  .fold {
    border: solid transparent;
    border-width: 0 0 6px 6px;
    border-bottom-color: #333;
  }

  .root {
    gap: 4px;
    padding-left: 10px;
  }

  .root .icon {
    margin-left: 3px;
  }

  .member {
    padding-left: 29px;
  }

  .dash {
    width: 5px;
    border-top: 1px dotted #777;
  }

  .node {
    display: flex;
    height: 16px;
    padding: 0 4px 0 1px;
  }

  .node .icon,
  .bottom .icon {
    width: 14px;
    height: 14px;
    margin: 1px 7px 0 1px;
  }

  .selected {
    background: #316ac5;
  }

  .bottom {
    margin-left: 30px;
    border-left: 1px dotted #888;
  }

  .bottom.last {
    border-left-color: transparent;
  }

  .elbow {
    align-self: flex-start;
    width: 10px;
    height: 7px;
    margin: 0 0 0 19px;
    border: dotted #888;
    border-width: 0 0 1px 1px;
  }

  main {
    flex: 1;
    min-width: 0;
    display: flex;
    flex-direction: column;
  }

  .canvas {
    position: relative;
    flex: 1;
    min-height: 0;
    background: #000;
  }

  .canvas > svg,
  .section svg {
    display: block;
    width: 100%;
    height: 100%;
  }

  .axis {
    font: 300 14px "Open Sans", sans-serif;
  }

  .dialog {
    position: absolute;
    top: 3px;
    left: 3px;
    box-sizing: border-box;
    width: 180px;
    height: 181px;
    display: flex;
    flex-direction: column;
    padding: 0 5px 5px;
    border: 1px solid #8c8f94;
    border-radius: 5px;
    background: linear-gradient(#47494c, #2b2c2f 60px, #101215 70px, #0c0e11);
  }

  .dialog h3 {
    flex: none;
    align-self: flex-start;
    height: 23px;
    margin-bottom: 2px;
    padding: 0 8px 0 1px;
    background: radial-gradient(closest-side, #8a8c8f, transparent);
    color: #000;
    line-height: 23px;
  }

  .options {
    flex: 1;
    padding: 2px 3px;
    border: 2px solid #8f959e;
    outline: 1px solid #000;
    background: #fff;
    font: 12px/12px var(--song);
  }

  .options label {
    display: flex;
    align-items: center;
    gap: 4px;
    height: 12px;
  }

  .app input[type="checkbox"] {
    flex: none;
    box-sizing: border-box;
    width: 11px;
    height: 11px;
    border: 1px solid #8e8f8f;
    background: #f2f2f2;
    appearance: none;
  }

  input[type="checkbox"]:checked::after {
    content: "";
    display: block;
    width: 2px;
    height: 5px;
    margin: 0 0 0 3px;
    border: solid #3a4f9c;
    border-width: 0 2px 2px 0;
    transform: rotate(40deg);
  }

  .coords {
    color: #777;
    font-size: 12px;
  }

  .coords .combo {
    color: #000;
  }

  .coords label {
    display: flex;
    align-items: center;
    gap: 4px;
  }

  .app .coords input[type="number"] {
    box-sizing: border-box;
    width: 58px;
    height: 23px;
    padding-right: 18px;
    border: 1px solid #6e6e6e;
    background: #f4f4f4;
    color: #777;
    text-align: right;
    appearance: textfield;
  }

  .app .coords input::-webkit-inner-spin-button {
    display: none;
  }

  .coords label:has([type="number"]) {
    position: relative;
  }

  .coords label:has([type="number"])::before,
  .coords label:has([type="number"])::after {
    content: "";
    position: absolute;
    right: 5px;
    border: 3px solid transparent;
  }

  .coords label:has([type="number"])::before {
    top: 2px;
    border-bottom-color: #555;
  }

  .coords label:has([type="number"])::after {
    bottom: 2px;
    border-top-color: #555;
  }

  .coords .unit {
    margin: 0 5px 0 1px;
  }

  .coords .turn {
    gap: 9px;
    color: #000;
  }

  .inspector {
    flex: none;
    width: 687px;
    margin-left: 3px;
    display: flex;
    flex-direction: column;
    font-family: var(--song);
  }

  .sheet {
    flex: 1;
    min-height: 0;
    margin: 2px 1px 3px 0;
    padding-right: 2px;
    border: 1px solid #a0a0a0;
    background: #fff;
  }

  table {
    width: 100%;
    border-collapse: collapse;
    table-layout: fixed;
  }

  th,
  td {
    box-sizing: border-box;
    height: 19px;
    padding: 0 2px;
    border: 1px solid #c0c0c0;
    font-weight: normal;
    line-height: 16px;
    text-align: left;
  }

  thead th {
    height: 23px;
    border-top: 0;
    background: linear-gradient(#fff, #ececec);
    text-align: center;
  }

  thead .value {
    background: linear-gradient(#fbd9a2, #f2c05f);
    color: #5c005c;
  }

  .num {
    width: 22px;
    background: #f4f4f4;
    text-align: center;
  }

  .name {
    width: 120px;
  }

  td.name {
    padding-left: 19px;
  }

  td.value {
    color: #808080;
  }

  .current .num {
    background: #ffd58d;
    color: #5c005c;
  }

  .current .name {
    background: #3399ff;
    color: #fff;
  }

  .current .value {
    background: #e0f0ff;
  }

  .link .name {
    color: #0000ff;
  }

  .group-row .name {
    padding-left: 3px;
    color: #808080;
  }

  .app .plus {
    box-sizing: border-box;
    width: 11px;
    height: 11px;
    margin-right: 5px;
    border: 1px solid #808080;
    color: #000;
    line-height: 8px;
  }

  .slopes {
    flex: none;
    box-sizing: border-box;
    display: flex;
    align-items: center;
    gap: 187px;
    height: 34px;
    padding-left: 103px;
    border-bottom: 1px solid #a0a0a0;
    border-top: 1px solid #fff;
  }

  .slopes label {
    display: flex;
    align-items: center;
    gap: 4px;
  }

  .app input[type="radio"] {
    box-sizing: border-box;
    width: 12px;
    height: 12px;
    border: 1px solid #8e8f8f;
    border-radius: 50%;
    background: radial-gradient(#d0d4da, #f6f6f6);
    appearance: none;
  }

  .app input[type="radio"]:checked {
    background: radial-gradient(circle, #2b9cd8 1px, #123f66 3px, #f6f6f6 4px);
  }

  .section {
    flex: none;
    height: 280px;
    margin-right: 1px;
    background: #000;
  }

  .note {
    fill: #fff;
    font: 10px "Noto Sans CJK SC", sans-serif;
  }

  .dim {
    fill: #00ff00;
    font: 9px "Noto Sans CJK SC", sans-serif;
  }

  .title {
    fill: #fff;
    font: 300 24px "Liberation Serif", "Noto Sans CJK SC", serif;
  }

  .actions {
    flex: none;
    box-sizing: border-box;
    display: flex;
    align-items: center;
    justify-content: flex-end;
    height: 45px;
    margin-right: 1px;
    padding: 3px 25px 0 0;
    border-right: 1px solid #a0a0a0;
    border-bottom: 1px solid #a0a0a0;
  }

  .app .actions button {
    width: 73px;
    height: 23px;
    border: 1px solid #707070;
    border-radius: 3px;
    background: linear-gradient(#f2f2f2 50%, #dddddd 50%, #cfcfcf);
    box-shadow: inset 0 0 0 1px #fcfcfc;
  }

  .status {
    flex: none;
    display: flex;
    gap: 2px;
    height: 21px;
    padding-top: 1px;
    box-sizing: border-box;
    font-family: var(--song);
  }

  .status span {
    box-sizing: border-box;
    height: 20px;
    padding-left: 1px;
    border: 1px solid #d5d5d5;
    background: linear-gradient(#fff, #f0f0f0);
    line-height: 20px;
  }

  .status .s1 {
    width: 79px;
    padding: 0;
    border-left: 0;
  }

  .s2 {
    width: 78px;
  }

  .s3 {
    width: 98px;
  }

  .s4 {
    width: 48px;
  }

  .rest {
    flex: 1;
  }

  .fps {
    width: 71px;
  }

  .taskbar {
    flex: none;
    box-sizing: border-box;
    display: flex;
    gap: 3px;
    height: 8px;
    border-top: 1px solid #10233a;
    background: linear-gradient(90deg, #2d84b4, #1d5f9e 60%, #1a3f70);
  }

  .tray {
    width: 110px;
  }

  .task {
    box-sizing: border-box;
    width: 159px;
    border: 1px solid #dcecf6;
    border-bottom: 0;
    border-radius: 2px 2px 0 0;
    background: linear-gradient(90deg, #b9d0dd, #6f9fbf);
  }

  .desk {
    width: 13px;
    margin-left: auto;
    border-left: 1px solid #aebfd2;
    background: #6f87a3;
  }
</style>
